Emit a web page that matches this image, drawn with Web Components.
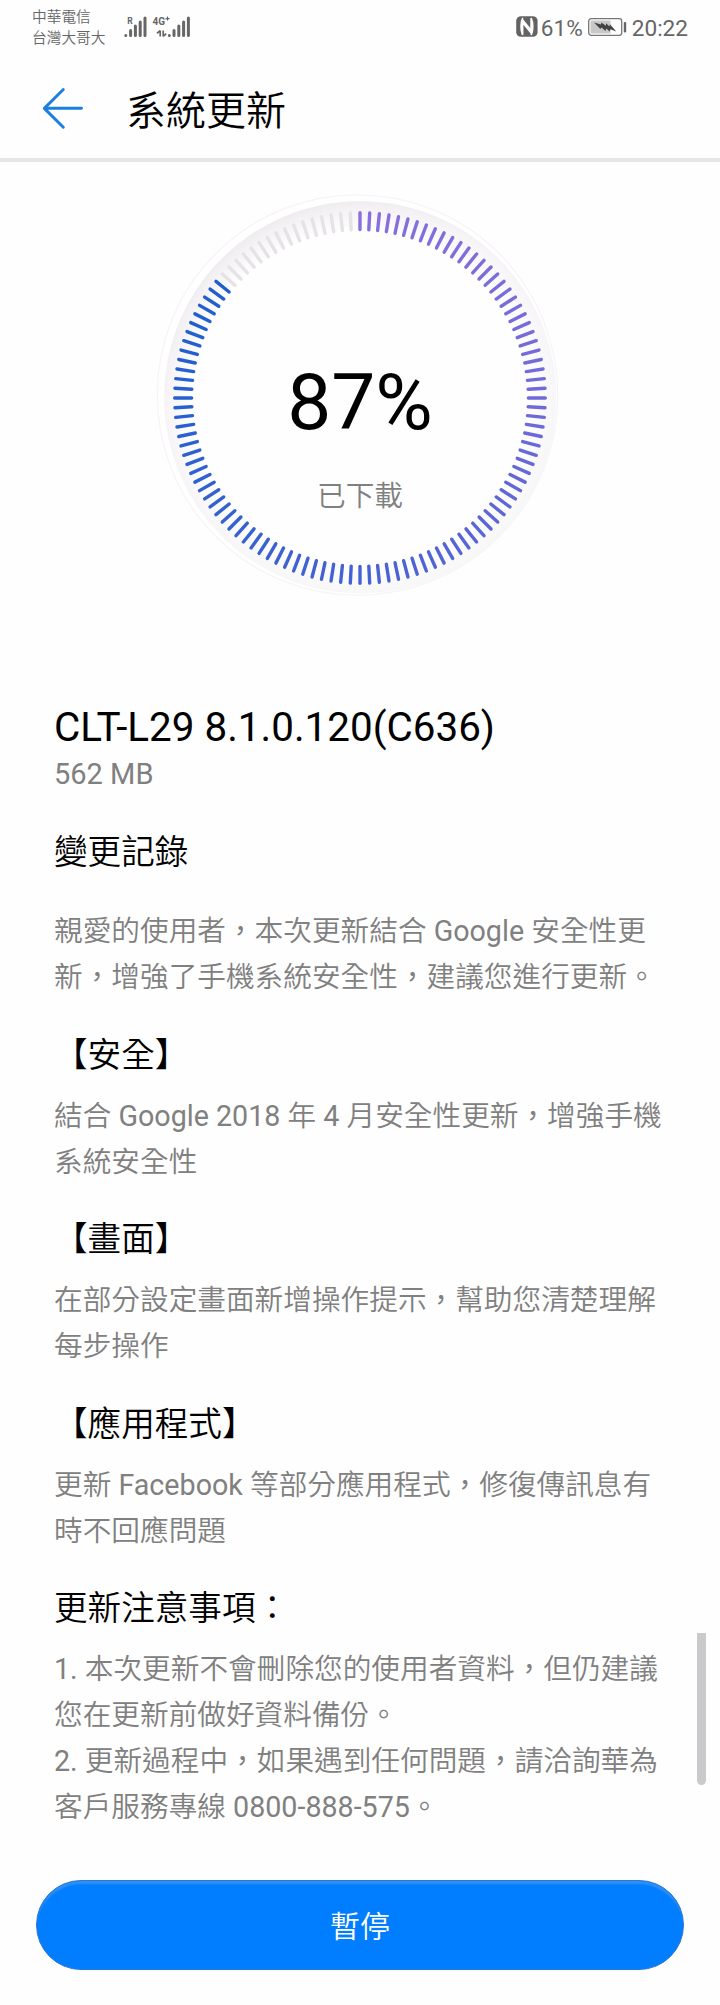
<!DOCTYPE html>
<html lang="zh-Hant-TW">
<head>
<meta charset="utf-8">
<title>系統更新</title>
<style>
html,body{margin:0;padding:0;background:#fefefe}
body{width:720px;height:2005px;overflow:hidden;font-family:Roboto,"Noto Sans CJK TC",sans-serif;color:#000;text-spacing-trim:space-all}
</style>
</head>
<body>
<update-screen></update-screen>
<script>
const define = (name, html, setup) => {
  const t = document.createElement('template');
  t.innerHTML = html;
  customElements.define(name, class extends HTMLElement {
    constructor() {
      super();
      this.attachShadow({mode: 'open'}).append(t.content.cloneNode(true));
    }
    connectedCallback() { if (setup) setup(this, this.shadowRoot); }
  });
};

define('status-bar', `
<style>
:host{display:flex;height:60px;box-sizing:border-box;padding:0 32px;color:#666;justify-content:space-between}
.left,.right{display:flex;align-items:flex-start}
.carriers{font-size:14.7px;line-height:21px;padding-top:7px;font-weight:350;width:92px;white-space:nowrap}
svg{display:block;flex:none}
.right{font-size:22.6px;line-height:28px;padding-top:15px}
.nfc{margin:1px 3px 0 0}
.bat{margin:3px 5px 0 5px}
</style>
<div class="left">
 <div class="carriers">中華電信<br>台灣大哥大</div>
 <svg width="68" height="40" viewBox="124 0 68 40" fill="#666">
  <g stroke="#666" stroke-width="3" stroke-linecap="round">
   <path d="M125.8 35.4v.1M130.6 30.5v5M135.4 26v9.500M140.2 22v13.500M145 18v17.500"/>
   <path d="M169.300 35.400v.1M174 30.500v5M178.800 26v9.500M183.600 22v13.500M188.400 18v17.500"/>
  </g>
  <text x="127.300" y="24" font-size="9.500" font-weight="700" textLength="5.500" lengthAdjust="spacingAndGlyphs">R</text>
  <text x="152.500" y="25.300" font-size="11.500" font-weight="700" textLength="12.500" lengthAdjust="spacingAndGlyphs">4G</text>
  <path d="M165.500 18.600h4M167.500 16.600v4" stroke="#666" stroke-width="1.200"/>
  <path d="M160.200 30.500v6M157 33.400l3-2.700M163.200 30.500v6M166.200 33.600l-3 2.700" stroke="#666" stroke-width="1.700" fill="none"/>
 </svg>
</div>
<div class="right">
 <svg class="nfc" width="22" height="21" viewBox="0 0 21 21" preserveAspectRatio="none">
  <rect x=".2" y=".2" width="20.400" height="20.600" rx="4.500" fill="#636363"/>
  <path d="M6.500 2C4.300 6 4.300 14.500 6.300 18.800V6.500l8.200 10.500M14.300 19c2.400-4 2.200-12.500.1-16.800v12L6.300 4" fill="none" stroke="#fefefe" stroke-width="1.600"/>
 </svg>
 <span>61%</span>
 <svg class="bat" width="39" height="19" viewBox="0 0 39 19">
  <rect x=".7" y=".7" width="33" height="16.600" rx="2.500" fill="#fefefe" stroke="#777" stroke-width="1.300"/>
  <rect x="2.500" y="2.500" width="20" height="13" fill="#c8c8c8"/>
  <path d="M6 4.600l7 2 .4-2.100 4.500 3.300.2-2.500 3.300 3.100.5-2.100 6.300 7.200-5.700-2.300-1 2.300-3.100-3-1 2.600-3.800-3.700-1.200 1.500z" fill="#444"/>
  <rect x="35.800" y="4" width="2.400" height="10.500" rx="1" fill="#666"/>
 </svg>
 <span>20:22</span>
</div>`);

define('app-bar', `
<style>
:host{display:flex;height:102px;box-sizing:border-box;border-bottom:4px solid #e6e4e6;padding-left:42px;align-items:flex-start}
svg{display:block;margin-top:27px;width:43px;height:43px}
h1{margin:23px 0 0 41px;font-size:40px;line-height:58px;font-weight:350}
</style>
<svg viewBox="0 0 43 43" fill="none" stroke="#1a7fe0" stroke-width="2.900" stroke-linecap="round" stroke-linejoin="round"><path d="M21.300 2.500L2.300 21.400L21.300 40.300M3 21.300H39.500"/></svg>
<h1><slot></slot></h1>`);

define('progress-ring', `
<style>
:host{display:grid;height:500px}
svg,.label{grid-area:1/1;display:block}
.label{text-align:center;padding-top:190px}
.pct{font-size:78.500px;line-height:100px}
.sub{font-size:28.670px;line-height:46px;color:#808080;font-weight:350;padding-top:21px}
</style>
<svg width="720" height="500" viewBox="0 162 720 500">
 <defs>
  <linearGradient id="face" x1=".1" y1="0" x2=".6" y2="1"><stop offset="0" stop-color="#ebe7eb"/><stop offset=".4" stop-color="#f6f3f6"/><stop offset="1" stop-color="#f8f7f8"/></linearGradient>
  <radialGradient id="fade"><stop offset=".86" stop-color="#fefefe"/><stop offset="1" stop-color="#fefefe" stop-opacity=".1"/></radialGradient>
 </defs>
 <circle cx="357.500" cy="395" r="200.200" fill="#fff" stroke="#f6f5f6" stroke-width="1.300"/>
 <circle cx="360.200" cy="397.300" r="196" fill="url(#face)"/>
 <circle cx="360.200" cy="397.300" r="195" fill="url(#fade)"/>
 <g id="ticks" stroke-width="3.400" stroke-linecap="round"></g>
</svg>
<div class="label"><div class="pct"></div><div class="sub"><slot></slot></div></div>`, (el, root) => {
  const value = +el.getAttribute('value');
  root.querySelector('.pct').textContent = value + '%';
  const total = 120, on = Math.floor(value / 100 * total);
  const stops = [[0,[136,112,222]],[30,[112,106,216]],[60,[70,98,212]],[90,[38,96,208]],[119,[28,90,204]]];
  const mix = i => {
    let k = 0;
    while (i > stops[k + 1][0]) k++;
    const [a, ca] = stops[k], [b, cb] = stops[k + 1];
    return ca.map((v, n) => Math.round(v + (cb[n] - v) * (i - a) / (b - a)));
  };
  const g = root.getElementById('ticks');
  for (let i = 0; i < total; i++) {
    const a = i * 3 * Math.PI / 180, s = Math.sin(a), c = -Math.cos(a);
    const l = document.createElementNS('http://www.w3.org/2000/svg', 'line');
    l.setAttribute('x1', 360 + s * 168.4); l.setAttribute('y1', 398 + c * 168.4);
    l.setAttribute('x2', 360 + s * 185.3); l.setAttribute('y2', 398 + c * 185.3);
    l.setAttribute('stroke', i < on ? `rgb(${mix(i)})` : '#e6e2e7');
    g.append(l);
  }
});

define('release-info', `
<style>
:host{display:block;padding:39.500px 54px 0}
.v{font-size:40.400px;line-height:52px;white-space:nowrap}
.s{font-size:29px;line-height:40px;color:#808080}
</style>
<div class="v"><slot name="version"></slot></div><div class="s"><slot name="size"></slot></div>`);

define('note-section', `
<style>
:host{display:block;padding:0 0 0 54px;white-space:nowrap}
h2{margin:0;font-size:33.600px;line-height:48px;font-weight:350}
p{margin:var(--gap,13px) 0 0;font-size:28.670px;line-height:46px;color:#808080;font-weight:350}
::slotted(b){font-weight:400}
</style>
<h2><slot name="title"></slot></h2><p><slot></slot></p>`);

define('primary-button', `
<style>
:host{display:block;padding:0 36px}
button{display:block;width:100%;height:90px;border:1px solid #2d78cf;border-radius:45px;background:#007eff;box-shadow:inset 0 4px 2px -1px #2f92f5;color:#fff;font:350 30px/44px Roboto,"Noto Sans CJK TC",sans-serif;padding:3px 0 0}
</style>
<button><slot></slot></button>`);

define('update-screen', `
<style>
:host{display:grid;grid-template-rows:60px 102px 500px 1218px 125px;width:720px;height:2005px;background:#fefefe}
.body{display:grid;grid-template-columns:690px 30px}
.notes{display:flex;flex-direction:column}
note-section{margin-top:31.600px}
.first{--gap:31px;margin-top:35.500px}
.bar{width:9px;height:152px;margin:971px 0 0 7px;background:#cac9cb;border-radius:0 0 5px 5px}
</style>
<status-bar></status-bar>
<app-bar>系統更新</app-bar>
<progress-ring value="87">已下載</progress-ring>
<div class="body">
 <div class="notes">
  <release-info><span slot="version">CLT-L29 8.1.0.120(C636)</span><span slot="size">562 MB</span></release-info>
  <note-section class="first"><span slot="title">變更記錄</span>親愛的使用者，本次更新結合<b> Google </b>安全性更<br>新，增強了手機系統安全性，建議您進行更新。</note-section>
  <note-section><span slot="title">【安全】</span>結合<b> Google 2018 </b>年<b> 4 </b>月安全性更新，增強手機<br>系統安全性</note-section>
  <note-section><span slot="title">【畫面】</span>在部分設定畫面新增操作提示，幫助您清楚理解<br>每步操作</note-section>
  <note-section><span slot="title">【應用程式】</span>更新<b> Facebook </b>等部分應用程式，修復傳訊息有<br>時不回應問題</note-section>
  <note-section><span slot="title">更新注意事項：</span><b>1. </b>本次更新不會刪除您的使用者資料，但仍建議<br>您在更新前做好資料備份。<br><b>2. </b>更新過程中，如果遇到任何問題，請洽詢華為<br>客戶服務專線<b> 0800-888-575</b>。</note-section>
 </div>
 <div class="bar"></div>
</div>
<primary-button>暫停</primary-button>`);
</script>
</body>
</html>
